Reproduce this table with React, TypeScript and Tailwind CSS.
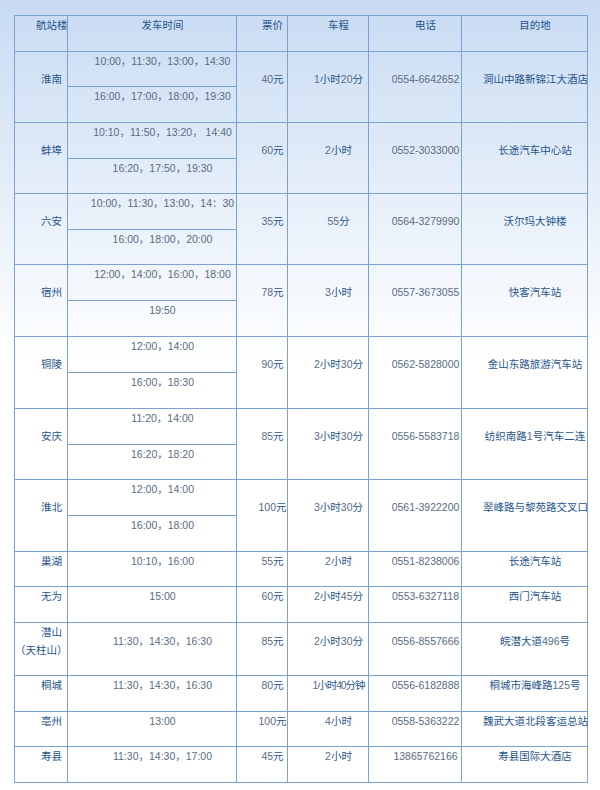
import React from 'react';

type Route = {
  station: string[];
  times: string[];
  price: string;
  duration: string;
  phone: string;
  dest: string;
};

const routes: Route[] = [
  {
    station: ['淮南'],
    times: ['10:00，11:30，13:00，14:30', '16:00，17:00，18:00，19:30'],
    price: '40元',
    duration: '1小时20分',
    phone: '0554-6642652',
    dest: '洞山中路新锦江大酒店',
  },
  {
    station: ['蚌埠'],
    times: ['10:10，11:50，13:20， 14:40', '16:20，17:50，19:30'],
    price: '60元',
    duration: '2小时',
    phone: '0552-3033000',
    dest: '长途汽车中心站',
  },
  {
    station: ['六安'],
    times: ['10:00，11:30，13:00，14：30', '16:00，18:00，20:00'],
    price: '35元',
    duration: '55分',
    phone: '0564-3279990',
    dest: '沃尔玛大钟楼',
  },
  {
    station: ['宿州'],
    times: ['12:00，14:00，16:00，18:00', '19:50'],
    price: '78元',
    duration: '3小时',
    phone: '0557-3673055',
    dest: '快客汽车站',
  },
  {
    station: ['铜陵'],
    times: ['12:00，14:00', '16:00，18:30'],
    price: '90元',
    duration: '2小时30分',
    phone: '0562-5828000',
    dest: '金山东路旅游汽车站',
  },
  {
    station: ['安庆'],
    times: ['11:20，14:00', '16:20，18:20'],
    price: '85元',
    duration: '3小时30分',
    phone: '0556-5583718',
    dest: '纺织南路1号汽车二连',
  },
  {
    station: ['淮北'],
    times: ['12:00，14:00', '16:00，18:00'],
    price: '100元',
    duration: '3小时30分',
    phone: '0561-3922200',
    dest: '翠峰路与黎苑路交叉口',
  },
  {
    station: ['巢湖'],
    times: ['10:10，16:00'],
    price: '55元',
    duration: '2小时',
    phone: '0551-8238006',
    dest: '长途汽车站',
  },
  {
    station: ['无为'],
    times: ['15:00'],
    price: '60元',
    duration: '2小时45分',
    phone: '0553-6327118',
    dest: '西门汽车站',
  },
  {
    station: ['潜山', '（天柱山）'],
    times: ['11:30，14:30，16:30'],
    price: '85元',
    duration: '2小时30分',
    phone: '0556-8557666',
    dest: '皖潜大道496号',
  },
  {
    station: ['桐城'],
    times: ['11:30，14:30，16:30'],
    price: '80元',
    duration: '1小时40分钟',
    phone: '0556-6182888',
    dest: '桐城市海峰路125号',
  },
  {
    station: ['亳州'],
    times: ['13:00'],
    price: '100元',
    duration: '4小时',
    phone: '0558-5363222',
    dest: '魏武大道北段客运总站',
  },
  {
    station: ['寿县'],
    times: ['11:30，14:30，17:00'],
    price: '45元',
    duration: '2小时',
    phone: '13865762166',
    dest: '寿县国际大酒店',
  },
];

// digits and punctuation render grey, hanzi render dark blue
function Colored({ text }: { text: string }) {
  const parts = text.split(/([0-9:：，\-\s]+)/);
  return (
    <>
      {parts.map((p, i) =>
        p === '' ? null : /^[0-9:：，\-\s]+$/.test(p) ? (
          <span key={i} className="text-[#5a6b82]">
            {p}
          </span>
        ) : (
          <span key={i} className="text-[#27558b]">
            {p}
          </span>
        )
      )}
    </>
  );
}

function Cell({
  lines,
  span,
  tight,
}: {
  lines: string[];
  span?: boolean;
  tight?: boolean;
}) {
  return (
    <div
      className={`flex flex-col justify-center border-r border-b border-[#7aa3d4] text-center ${
        span ? 'row-span-2' : ''
      }`}
    >
      <div
        className={`indent-[2em] whitespace-nowrap pb-[17px] leading-[18px] ${
          tight ? 'tracking-[-1.1px]' : ''
        }`}
      >
        {lines.map((l, i) => (
          <React.Fragment key={i}>
            {i > 0 && <br />}
            <Colored text={l} />
          </React.Fragment>
        ))}
      </div>
    </div>
  );
}

const headers = ['航站楼', '发车时间', '票价', '车程', '电话', '目的地'];

export default function App() {
  return (
    <div className="h-[790px] w-[600px] bg-[linear-gradient(180deg,#c8dbf3_0px,#ffffff_360px)] pl-[14px] pt-[15px] font-['Liberation_Sans','Noto_Sans_CJK_SC',sans-serif] text-[10.5px]">
      <div className="grid w-[574px] grid-cols-[53px_169px_51px_81px_93px_126px] grid-rows-[36px_35px_36px_36px_35px_36px_35px_36px_36px_36px_36px_36px_35px_36px_36px_35px_36px_53px_36px_35px_36px] border-t border-l border-[#7aa3d4]">
        {headers.map((h) => (
          <Cell key={h} lines={[h]} />
        ))}
        {routes.map((r) => {
          const span = r.times.length === 2;
          return (
            <React.Fragment key={r.station[0]}>
              <Cell lines={r.station} span={span} />
              <Cell lines={[r.times[0]]} />
              <Cell lines={[r.price]} span={span} />
              <Cell lines={[r.duration]} span={span} tight={r.duration.length > 6} />
              <Cell lines={[r.phone]} span={span} />
              <Cell lines={[r.dest]} span={span} />
              {span && <Cell lines={[r.times[1]]} />}
            </React.Fragment>
          );
        })}
      </div>
    </div>
  );
}
